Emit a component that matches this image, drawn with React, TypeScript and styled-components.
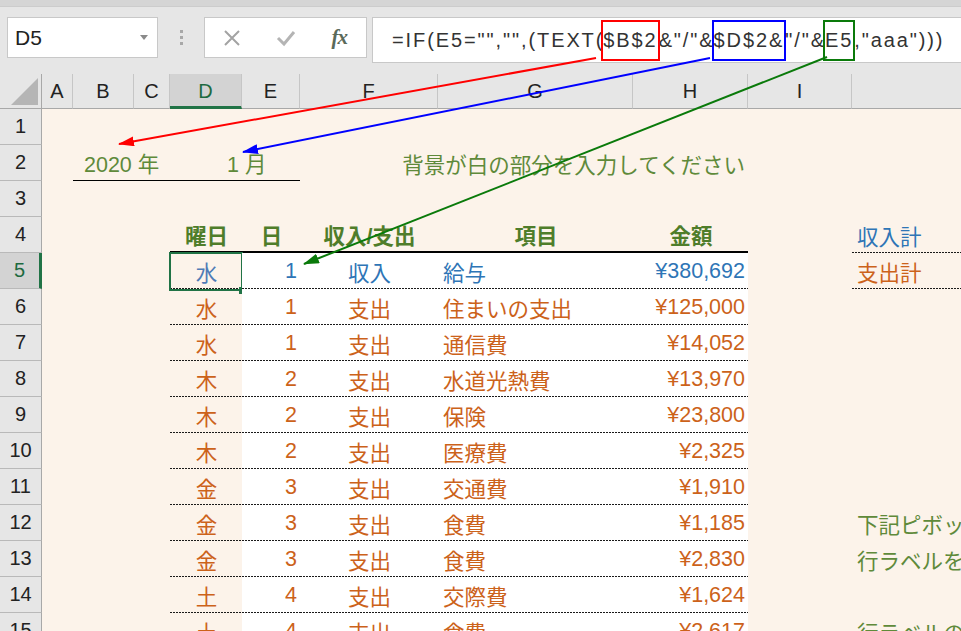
import React from "react";
import styled, { createGlobalStyle, css } from "styled-components";

const GlobalStyle = createGlobalStyle`
  html, body {
    margin: 0;
    padding: 0;
    background: #ffffff;
  }
  body {
    font-family: "Liberation Sans", "Noto Sans CJK JP", sans-serif;
  }
`;

// row header, A..J
const COLS = "42px 31px 61px 36px 72px 58px 138px 195px 115px 104px 260px";

const GREEN = "#217346";
const OLIVE = "#5f8a3a";
const HEAD = "#4f7d2a";
const BLUE = "#2e75b6";
const ORANGE = "#cc621a";

const Window = styled.div`
  position: relative;
  width: 961px;
  height: 631px;
  overflow: hidden;
  background: #fcf3ea;
`;

const TitleStrip = styled.div`
  height: 6px;
  background: #d5d5d5;
  border-bottom: 1px solid #cccccc;
`;

const FormulaArea = styled.div`
  height: 67px;
  box-sizing: border-box;
  background: #e6e6e6;
  display: flex;
  align-items: flex-start;
  padding: 10px 0 0 7px;
`;

const NameBox = styled.div`
  width: 151px;
  height: 41px;
  box-sizing: border-box;
  background: #fff;
  border: 1px solid #c8c8c8;
  display: flex;
  align-items: center;
  justify-content: space-between;
  padding: 0 9px 0 7px;
  font-size: 21px;
  color: #222;
`;

const DropArrow = styled.span`
  width: 0;
  height: 0;
  border-left: 4px solid transparent;
  border-right: 4px solid transparent;
  border-top: 5px solid #8a8a8a;
`;

const Grip = styled.div`
  width: 46px;
  height: 41px;
  display: flex;
  flex-direction: column;
  align-items: center;
  justify-content: center;
  gap: 3px;
  & span {
    width: 3px;
    height: 3px;
    background: #a8a8a8;
  }
`;

const ButtonBox = styled.div`
  width: 163px;
  height: 41px;
  box-sizing: border-box;
  background: #fff;
  border: 1px solid #c8c8c8;
  display: flex;
  align-items: center;
`;

const IconSlot = styled.div`
  width: 54px;
  display: flex;
  align-items: center;
  justify-content: center;
`;

const Fx = styled.span`
  font-family: "Liberation Serif", serif;
  font-style: italic;
  font-weight: 700;
  font-size: 21px;
  color: #5a6a5a;
  letter-spacing: -1px;
`;

const FormulaBar = styled.div`
  flex: 1;
  margin-left: 5px;
  height: 46px;
  box-sizing: border-box;
  background: #fff;
  border: 1px solid #c8c8c8;
  border-right: none;
  display: flex;
  align-items: center;
  padding-left: 19px;
  font-size: 20px;
  letter-spacing: 1.9px;
  color: #333;
  white-space: nowrap;
`;

const Ref = styled.span<{ $c: string }>`
  border: 2px solid ${(p) => p.$c};
  padding: 7px 0;
  margin: 0 -1px 0 -3px;
`;

const HeaderRow = styled.div`
  display: grid;
  grid-template-columns: ${COLS};
  height: 35px;
  background: #e6e6e6;
`;

const Corner = styled.div`
  position: relative;
  border-right: 1px solid #a8a8a8;
  border-bottom: 1px solid #a8a8a8;
  box-sizing: border-box;
  &::after {
    content: "";
    position: absolute;
    right: 3px;
    bottom: 3px;
    width: 27px;
    height: 27px;
    background: #b5b5b5;
    clip-path: polygon(100% 0, 100% 100%, 0 100%);
  }
`;

const ColHead = styled.div<{ $active?: boolean }>`
  display: flex;
  align-items: center;
  justify-content: center;
  box-sizing: border-box;
  font-size: 20px;
  color: ${(p) => (p.$active ? "#1d6a40" : "#222")};
  background: ${(p) => (p.$active ? "#d3d3d3" : "transparent")};
  border-right: 1px solid #c6c6c6;
  border-bottom: ${(p) => (p.$active ? `3px solid ${GREEN}` : "1px solid #a8a8a8")};
  padding-top: ${(p) => (p.$active ? "2px" : "0")};
`;

const SheetRow = styled.div`
  display: grid;
  grid-template-columns: ${COLS};
  height: 36px;
  font-size: 21.5px;
`;

const RowNum = styled.div<{ $active?: boolean }>`
  grid-column: 1;
  display: flex;
  align-items: center;
  justify-content: center;
  box-sizing: border-box;
  font-size: 20px;
  color: ${(p) => (p.$active ? "#1d6a40" : "#222")};
  background: ${(p) => (p.$active ? "#d3d3d3" : "#e6e6e6")};
  border-bottom: 1px solid #b9b9b9;
  border-right: ${(p) => (p.$active ? `3px solid ${GREEN}` : "1px solid #a8a8a8")};
`;

type Line = "dot" | "thick" | "thin";

const lineStyle = (line?: Line) => {
  if (line === "dot")
    return css`
      background-image: repeating-linear-gradient(90deg, #1a1a1a 0 2px, transparent 2px 3px);
      background-size: 100% 1px;
      background-position: left bottom;
      background-repeat: no-repeat;
    `;
  if (line === "thick") return css`border-bottom: 2px solid #000;`;
  if (line === "thin") return css`border-bottom: 1px solid #000;`;
  return "";
};

const Cell = styled.div<{
  $c: number;
  $span?: number;
  $align?: "left" | "center" | "right";
  $color?: string;
  $bg?: string;
  $line?: Line;
  $bold?: boolean;
  $pl?: number;
  $pr?: number;
}>`
  grid-column: ${(p) => p.$c} / span ${(p) => p.$span ?? 1};
  position: relative;
  display: flex;
  align-items: center;
  justify-content: ${(p) =>
    p.$align === "center" ? "center" : p.$align === "right" ? "flex-end" : "flex-start"};
  box-sizing: border-box;
  padding: 0 ${(p) => p.$pr ?? 4}px 0 ${(p) => p.$pl ?? 5}px;
  white-space: nowrap;
  min-width: 0;
  color: ${(p) => p.$color ?? "#222"};
  background-color: ${(p) => p.$bg ?? "transparent"};
  font-weight: ${(p) => (p.$bold ? 700 : 400)};
  ${(p) => lineStyle(p.$line)}
`;

const Selection = styled.div`
  position: absolute;
  top: -1px;
  left: -1px;
  right: -1px;
  bottom: -2px;
  border: 2px solid ${GREEN};
  pointer-events: none;
  &::after {
    content: "";
    position: absolute;
    right: -5px;
    bottom: -5px;
    width: 7px;
    height: 7px;
    background: ${GREEN};
  }
`;

const Arrows = styled.svg`
  position: absolute;
  left: 0;
  top: 0;
  pointer-events: none;
  z-index: 5;
`;

type Entry = {
  n: number;
  day: string;
  d: string;
  kind: string;
  item: string;
  amt: string;
  tone: string;
  side?: { text: string; color: string; line?: Line };
};

const entries: Entry[] = [
  { n: 5, day: "水", d: "1", kind: "収入", item: "給与", amt: "¥380,692", tone: BLUE, side: { text: "支出計", color: ORANGE, line: "dot" } },
  { n: 6, day: "水", d: "1", kind: "支出", item: "住まいの支出", amt: "¥125,000", tone: ORANGE },
  { n: 7, day: "水", d: "1", kind: "支出", item: "通信費", amt: "¥14,052", tone: ORANGE },
  { n: 8, day: "木", d: "2", kind: "支出", item: "水道光熱費", amt: "¥13,970", tone: ORANGE },
  { n: 9, day: "木", d: "2", kind: "支出", item: "保険", amt: "¥23,800", tone: ORANGE },
  { n: 10, day: "木", d: "2", kind: "支出", item: "医療費", amt: "¥2,325", tone: ORANGE },
  { n: 11, day: "金", d: "3", kind: "支出", item: "交通費", amt: "¥1,910", tone: ORANGE },
  { n: 12, day: "金", d: "3", kind: "支出", item: "食費", amt: "¥1,185", tone: ORANGE, side: { text: "下記ピボットテーブルの", color: OLIVE } },
  { n: 13, day: "金", d: "3", kind: "支出", item: "食費", amt: "¥2,830", tone: ORANGE, side: { text: "行ラベルを選択すると", color: OLIVE } },
  { n: 14, day: "土", d: "4", kind: "支出", item: "交際費", amt: "¥1,624", tone: ORANGE },
  { n: 15, day: "土", d: "4", kind: "支出", item: "食費", amt: "¥2,617", tone: ORANGE, side: { text: "行ラベルの", color: OLIVE } },
];

const letters = ["A", "B", "C", "D", "E", "F", "G", "H", "I", "J"];

export default function App() {
  return (
    <Window>
      <GlobalStyle />
      <TitleStrip />
      <FormulaArea>
        <NameBox>
          D5
          <DropArrow />
        </NameBox>
        <Grip>
          <span />
          <span />
          <span />
        </Grip>
        <ButtonBox>
          <IconSlot>
            <svg width="18" height="18" viewBox="0 0 18 18">
              <path d="M2 2 L16 16 M16 2 L2 16" stroke="#a3a3a3" strokeWidth="2" />
            </svg>
          </IconSlot>
          <IconSlot>
            <svg width="20" height="18" viewBox="0 0 20 18">
              <path d="M2 9 L8 15 L18 3" stroke="#b4b4b4" strokeWidth="3" fill="none" />
            </svg>
          </IconSlot>
          <IconSlot>
            <Fx>fx</Fx>
          </IconSlot>
        </ButtonBox>
        <FormulaBar>
          =IF(E5="","",(TEXT(<Ref $c="#ff0000">$B$2</Ref>&"/"&<Ref $c="#0000ff">$D$2&</Ref>"/"&<Ref $c="#0a7a0a">E5</Ref>,"aaa")))
        </FormulaBar>
      </FormulaArea>

      <HeaderRow>
        <Corner />
        {letters.map((l) => (
          <ColHead key={l} $active={l === "D"}>
            {l}
          </ColHead>
        ))}
      </HeaderRow>

      <SheetRow>
        <RowNum>1</RowNum>
      </SheetRow>
      <SheetRow>
        <RowNum>2</RowNum>
        <Cell $c={3} $span={2} $pl={11} $color={OLIVE} $line="thin">
          2020 年
        </Cell>
        <Cell $c={5} $span={2} $pl={57} $color={OLIVE} $line="thin">
          1 月
        </Cell>
        <Cell $c={7} $span={3} $align="right" $pr={3} $color={OLIVE}>
          背景が白の部分を入力してください
        </Cell>
      </SheetRow>
      <SheetRow>
        <RowNum>3</RowNum>
      </SheetRow>
      <SheetRow>
        <RowNum>4</RowNum>
        <Cell $c={5} $align="center" $bold $color={HEAD} $line="thick">曜日</Cell>
        <Cell $c={6} $align="center" $bold $color={HEAD} $line="thick">日</Cell>
        <Cell $c={7} $align="center" $bold $color={HEAD} $line="thick">収入/支出</Cell>
        <Cell $c={8} $align="center" $bold $color={HEAD} $line="thick">項目</Cell>
        <Cell $c={9} $align="center" $bold $color={HEAD} $line="thick">金額</Cell>
        <Cell $c={11} $color={BLUE} $line="dot">収入計</Cell>
      </SheetRow>

      {entries.map((e) => (
        <SheetRow key={e.n}>
          <RowNum $active={e.n === 5}>{e.n}</RowNum>
          <Cell $c={5} $align="center" $line="dot" $color={e.n === 5 ? "#4f7bb6" : e.tone}>
            {e.day}
            {e.n === 5 && <Selection />}
          </Cell>
          <Cell $c={6} $align="right" $pr={3} $bg="#fff" $line="dot" $color={e.tone}>
            {e.d}
          </Cell>
          <Cell $c={7} $align="center" $bg="#fff" $line="dot" $color={e.tone}>
            {e.kind}
          </Cell>
          <Cell $c={8} $bg="#fff" $line="dot" $color={e.tone}>
            {e.item}
          </Cell>
          <Cell $c={9} $align="right" $pr={3} $bg="#fff" $line="dot" $color={e.tone}>
            {e.amt}
          </Cell>
          {e.side && (
            <Cell $c={11} $color={e.side.color} $line={e.side.line}>
              {e.side.text}
            </Cell>
          )}
        </SheetRow>
      ))}

      <Arrows width="961" height="631" viewBox="0 0 961 631">
        <defs>
          {[
            ["r", "#ff0000"],
            ["b", "#0000ff"],
            ["g", "#0a7a0a"],
          ].map(([id, c]) => (
            <marker
              key={id}
              id={`head-${id}`}
              markerUnits="userSpaceOnUse"
              markerWidth="16"
              markerHeight="10"
              refX="15"
              refY="5"
              orient="auto"
            >
              <path d="M0 0 L16 5 L0 10 Z" fill={c} />
            </marker>
          ))}
        </defs>
        <line x1="596" y1="58" x2="119" y2="144" stroke="#ff0000" strokeWidth="2" markerEnd="url(#head-r)" />
        <line x1="710" y1="58" x2="243" y2="152" stroke="#0000ff" strokeWidth="2" markerEnd="url(#head-b)" />
        <line x1="827" y1="57" x2="304" y2="264" stroke="#0a7a0a" strokeWidth="2" markerEnd="url(#head-g)" />
      </Arrows>
    </Window>
  );
}
